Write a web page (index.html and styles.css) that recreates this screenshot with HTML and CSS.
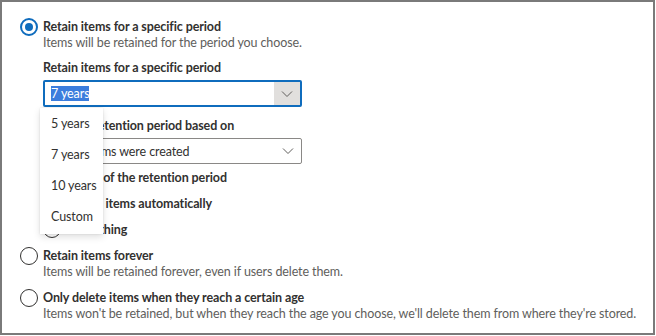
FILE: index.html
```html
<!DOCTYPE html>
<html lang="en">
<head>
    <meta charset="UTF-8">
    <title>Retention settings</title>
    <link rel="stylesheet" href="styles.css">
</head>
<body>
    <div class="panel">
        <div class="option">
            <span class="radio checked"></span>
            <div class="option-body">
                <div class="title">Retain items for a specific period</div>
                <div class="desc">Items will be retained for the period you choose.</div>

                <div class="label first-label">Retain items for a specific period</div>
                <div class="select-wrap">
                    <div class="select focused">
                        <span class="value"><span class="selected-text">7 years</span></span>
                        <span class="chevron active">
                            <svg width="12" height="12" viewBox="0 0 12 12"><path d="M1 3.5l5 5 5-5" fill="none" stroke="#605e5c" stroke-width="1"/></svg>
                        </span>
                    </div>
                    <ul class="menu">
                        <li>5 years</li>
                        <li>7 years</li>
                        <li>10 years</li>
                        <li>Custom</li>
                    </ul>
                </div>

                <div class="label second-label">Start the retention period based on</div>
                <div class="select">
                    <span class="value">When items were created</span>
                    <span class="chevron">
                        <svg width="12" height="12" viewBox="0 0 12 12"><path d="M1 3.5l5 5 5-5" fill="none" stroke="#605e5c" stroke-width="1"/></svg>
                    </span>
                </div>

                <div class="label end-label">At the end of the retention period</div>
                <div class="sub-option">
                    <span class="radio"></span>
                    <span class="title">Delete items automatically</span>
                </div>
                <div class="sub-option">
                    <span class="radio"></span>
                    <span class="title">Do nothing</span>
                </div>
            </div>
        </div>

        <div class="option">
            <span class="radio"></span>
            <div class="option-body">
                <div class="title">Retain items forever</div>
                <div class="desc">Items will be retained forever, even if users delete them.</div>
            </div>
        </div>

        <div class="option">
            <span class="radio"></span>
            <div class="option-body">
                <div class="title">Only delete items when they reach a certain age</div>
                <div class="desc">Items won't be retained, but when they reach the age you choose, we'll delete them from where they're stored.</div>
            </div>
        </div>
    </div>
</body>
</html>
```

FILE: styles.css
```css
/* Page */
body {
    margin: 0;
    background: white;
    font-family: 'Lato', 'Segoe UI', sans-serif;
    font-size: 12.5px;
    letter-spacing: -0.1px;
    color: #323130;
}

.panel {
    box-sizing: border-box;
    width: 655px;
    height: 335px;
    border: 2px solid #7a7a7a;
    padding: 16px 0 0 18px;
}

/* Radio options */
.option {
    display: flex;
    gap: 5px;
    margin-bottom: 9px;
}

.radio {
    box-sizing: border-box;
    flex: none;
    width: 18px;
    height: 18px;
    border: 1px solid #323130;
    border-radius: 50%;
    background: white;
}

.radio.checked {
    border: 2px solid #0f6cbd;
    position: relative;
}

.radio.checked::after {
    content: "";
    position: absolute;
    left: 3px;
    top: 3px;
    width: 8px;
    height: 8px;
    border-radius: 50%;
    background: #0f6cbd;
}

.title {
    font-weight: 700;
    line-height: 17px;
}

.desc {
    color: #605e5c;
    line-height: 16px;
}

/* Fields */
.label {
    font-weight: 700;
    line-height: 16px;
}

.first-label {
    margin: 9px 0 4px;
}

.second-label {
    margin: 11px 0 4px;
}

.end-label {
    margin: 6px 0 8px;
}

.select-wrap {
    position: relative;
}

.select {
    box-sizing: border-box;
    display: flex;
    width: 259px;
    height: 26px;
    border: 1px solid #8a8886;
    border-radius: 2px;
}

.select.focused {
    height: 27px;
    border: 2px solid #0f6cbd;
}

.value {
    flex: 1;
    display: flex;
    align-items: center;
    padding-left: 7px;
}

.select.focused .value {
    padding-left: 6px;
}

.selected-text {
    background: #3b7ddd;
    color: white;
}

.chevron {
    width: 26px;
    display: flex;
    align-items: center;
    justify-content: center;
}

.chevron.active {
    background: #e1dfdd;
}

/* Open dropdown */
.menu {
    position: absolute;
    left: -3px;
    top: 28px;
    z-index: 5;
    width: 63px;
    margin: 0;
    padding: 0 0 2px;
    list-style: none;
    background: white;
    box-shadow: 0 3px 7px rgba(0, 0, 0, 0.13), 0 0 2px rgba(0, 0, 0, 0.1);
}

.menu li {
    height: 31px;
    line-height: 31px;
    padding-left: 11px;
    color: #323130;
}

.sub-option {
    display: flex;
    align-items: center;
    gap: 5px;
    margin-bottom: 8px;
}

.sub-option:last-child {
    margin-bottom: 0;
}
```
